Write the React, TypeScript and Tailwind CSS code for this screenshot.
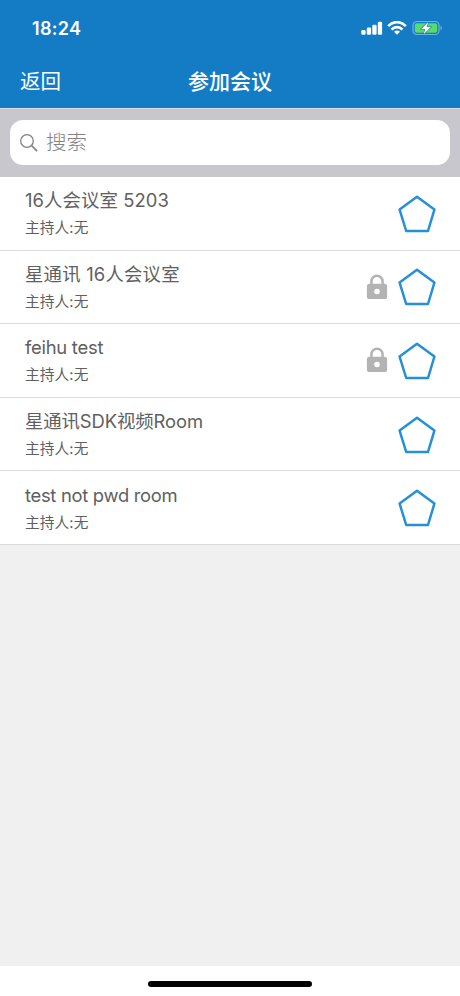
type Room = { name: string; locked?: boolean; spacing: string };

const rooms: Room[] = [
  { name: '16人会议室 5203', spacing: 'tracking-[0.08px]' },
  { name: '星通讯 16人会议室', locked: true, spacing: 'tracking-[0.2px]' },
  { name: 'feihu test', locked: true, spacing: 'tracking-[-0.25px]' },
  { name: '星通讯SDK视频Room', spacing: 'tracking-[-0.1px]' },
  { name: 'test not pwd room', spacing: 'tracking-[-0.3px]' },
];

function Signal() {
  return (
    <svg className="h-[14px] w-[22px]" viewBox="0 0 22 14" fill="white">
      <rect x="0.3" y="9" width="4.300" height="4.8" rx="1.2" />
      <rect x="5.800" y="6.5" width="4.300" height="7.3" rx="1.2" />
      <rect x="11.3" y="3.8" width="4.300" height="10" rx="1.2" />
      <rect x="16.800" y="0.8" width="4.300" height="13" rx="1.2" />
    </svg>
  );
}

function Wifi() {
  return (
    <svg className="ml-[4px] h-[14px] w-[20px]" viewBox="0 0 20 14" fill="none" stroke="white" strokeWidth="2.7">
      <path d="M1.2 5.2C6-.2 14-.2 18.800 5.200" />
      <path d="M4.500 8.700C7.600 5.300 12.400 5.300 15.500 8.700" />
      <path d="M10 13.700 7 10.700C8.700 9.100 11.300 9.100 13 10.700Z" fill="white" stroke="none" />
    </svg>
  );
}

function Battery() {
  return (
    <svg className="ml-[5px] h-[16px] w-[31px]" viewBox="0 0 31 16">
      <rect x="1" y="1.500" width="26" height="13" rx="3.800" fill="none" stroke="#74b1df" strokeWidth="1.200" />
      <rect x="2.800" y="3.200" width="22.400" height="9.600" rx="2" fill="#55dc6a" />
      <path d="M28.500 5.700C30.300 6.300 30.300 9.700 28.500 10.300Z" fill="#74b1df" />
      <path d="M16.200 2 9.200 9H13.200L11.700 14.200 18.800 7H14.700Z" fill="white" stroke="#177cc5" strokeWidth="1.200" paintOrder="stroke" />
    </svg>
  );
}

function Lock() {
  return (
    <svg className="mr-[10px] h-[26px] w-[22px]" viewBox="0 0 22 26">
      <path d="M5.400 10.500V7.300a5.600 5.600 0 0 1 11.200 0v3.200" fill="none" stroke="#b3b3b3" strokeWidth="2.500" />
      <path fillRule="evenodd" d="M3.500 9.700h15a2.600 2.600 0 0 1 2.600 2.600v10.200a2.600 2.600 0 0 1-2.600 2.600H3.500a2.600 2.600 0 0 1-2.600-2.600V12.300a2.600 2.600 0 0 1 2.600-2.600Zm7.500 5a2.800 2.800 0 1 0 0 5.600 2.800 2.800 0 0 0 0-5.600Z" fill="#b3b3b3" />
    </svg>
  );
}

function Pentagon() {
  return (
    <svg className="mt-[1px] h-[38px] w-[38px]" viewBox="0 0 38 38" fill="none" stroke="#2590d8" strokeWidth="2.500" strokeLinejoin="round">
      <path d="M19 1.800 36.400 14.600 30 36H8.200L1.600 14.600Z" />
    </svg>
  );
}

export default function App() {
  return (
    <main className="flex h-[996px] w-[460px] flex-col overflow-hidden bg-[#f0f0f0] font-['Inter','Noto_Sans_CJK_SC',sans-serif] text-[#606060]">
      <header className="h-[108px] shrink-0 bg-[#147cc5] text-white">
        <div className="flex h-[56px] items-center justify-between pr-[17px] pl-[32px]">
          <span className="text-[18px] font-semibold tracking-[0.3px]">18:24</span>
          <div className="flex items-center">
            <Signal />
            <Wifi />
            <Battery />
          </div>
        </div>
        <div className="grid h-[52px] grid-cols-3 items-center text-[20.500px] leading-[30px]">
          <button className="pl-[20px] text-left">返回</button>
          <h1 className="text-center text-[21px] font-medium">参加会议</h1>
        </div>
      </header>
      <section className="h-[69px] shrink-0 border-t border-[#dcdbe2] bg-[#c8c7ce] px-[10px] pt-[11px]">
        <div className="flex h-[45px] items-center rounded-[13px] bg-white pl-[10px] text-[#828286]">
          <svg className="h-[18px] w-[18px]" viewBox="0 0 18 18" fill="none" stroke="currentColor" strokeWidth="1.300">
            <circle cx="7" cy="7" r="6.300" />
            <path d="m11.500 11.500 5.600 5.600" strokeWidth="1.700" />
          </svg>
          <span className="ml-[8px] text-[20.500px] leading-[30px] font-light">搜索</span>
        </div>
      </section>
      <ul className="shrink-0 bg-white">
        {rooms.map((room) => (
          <li key={room.name} className="flex h-[73.600px] items-center border-b border-[#dadada] pr-[24px] pl-[25px]">
            <div className="grow">
              <p className={`-mt-px text-[18.400px] leading-[30px] ${room.spacing}`}>{room.name}</p>
              <p className="mt-px text-[14.700px] leading-[24px] tracking-[0.1px]">主持人:无</p>
            </div>
            {room.locked && <Lock />}
            <Pentagon />
          </li>
        ))}
      </ul>
      <div className="grow" />
      <footer className="flex h-[30px] shrink-0 items-start justify-center bg-white pt-[15px]">
        <div className="h-[6px] w-[164px] rounded-full bg-black" />
      </footer>
    </main>
  );
}
